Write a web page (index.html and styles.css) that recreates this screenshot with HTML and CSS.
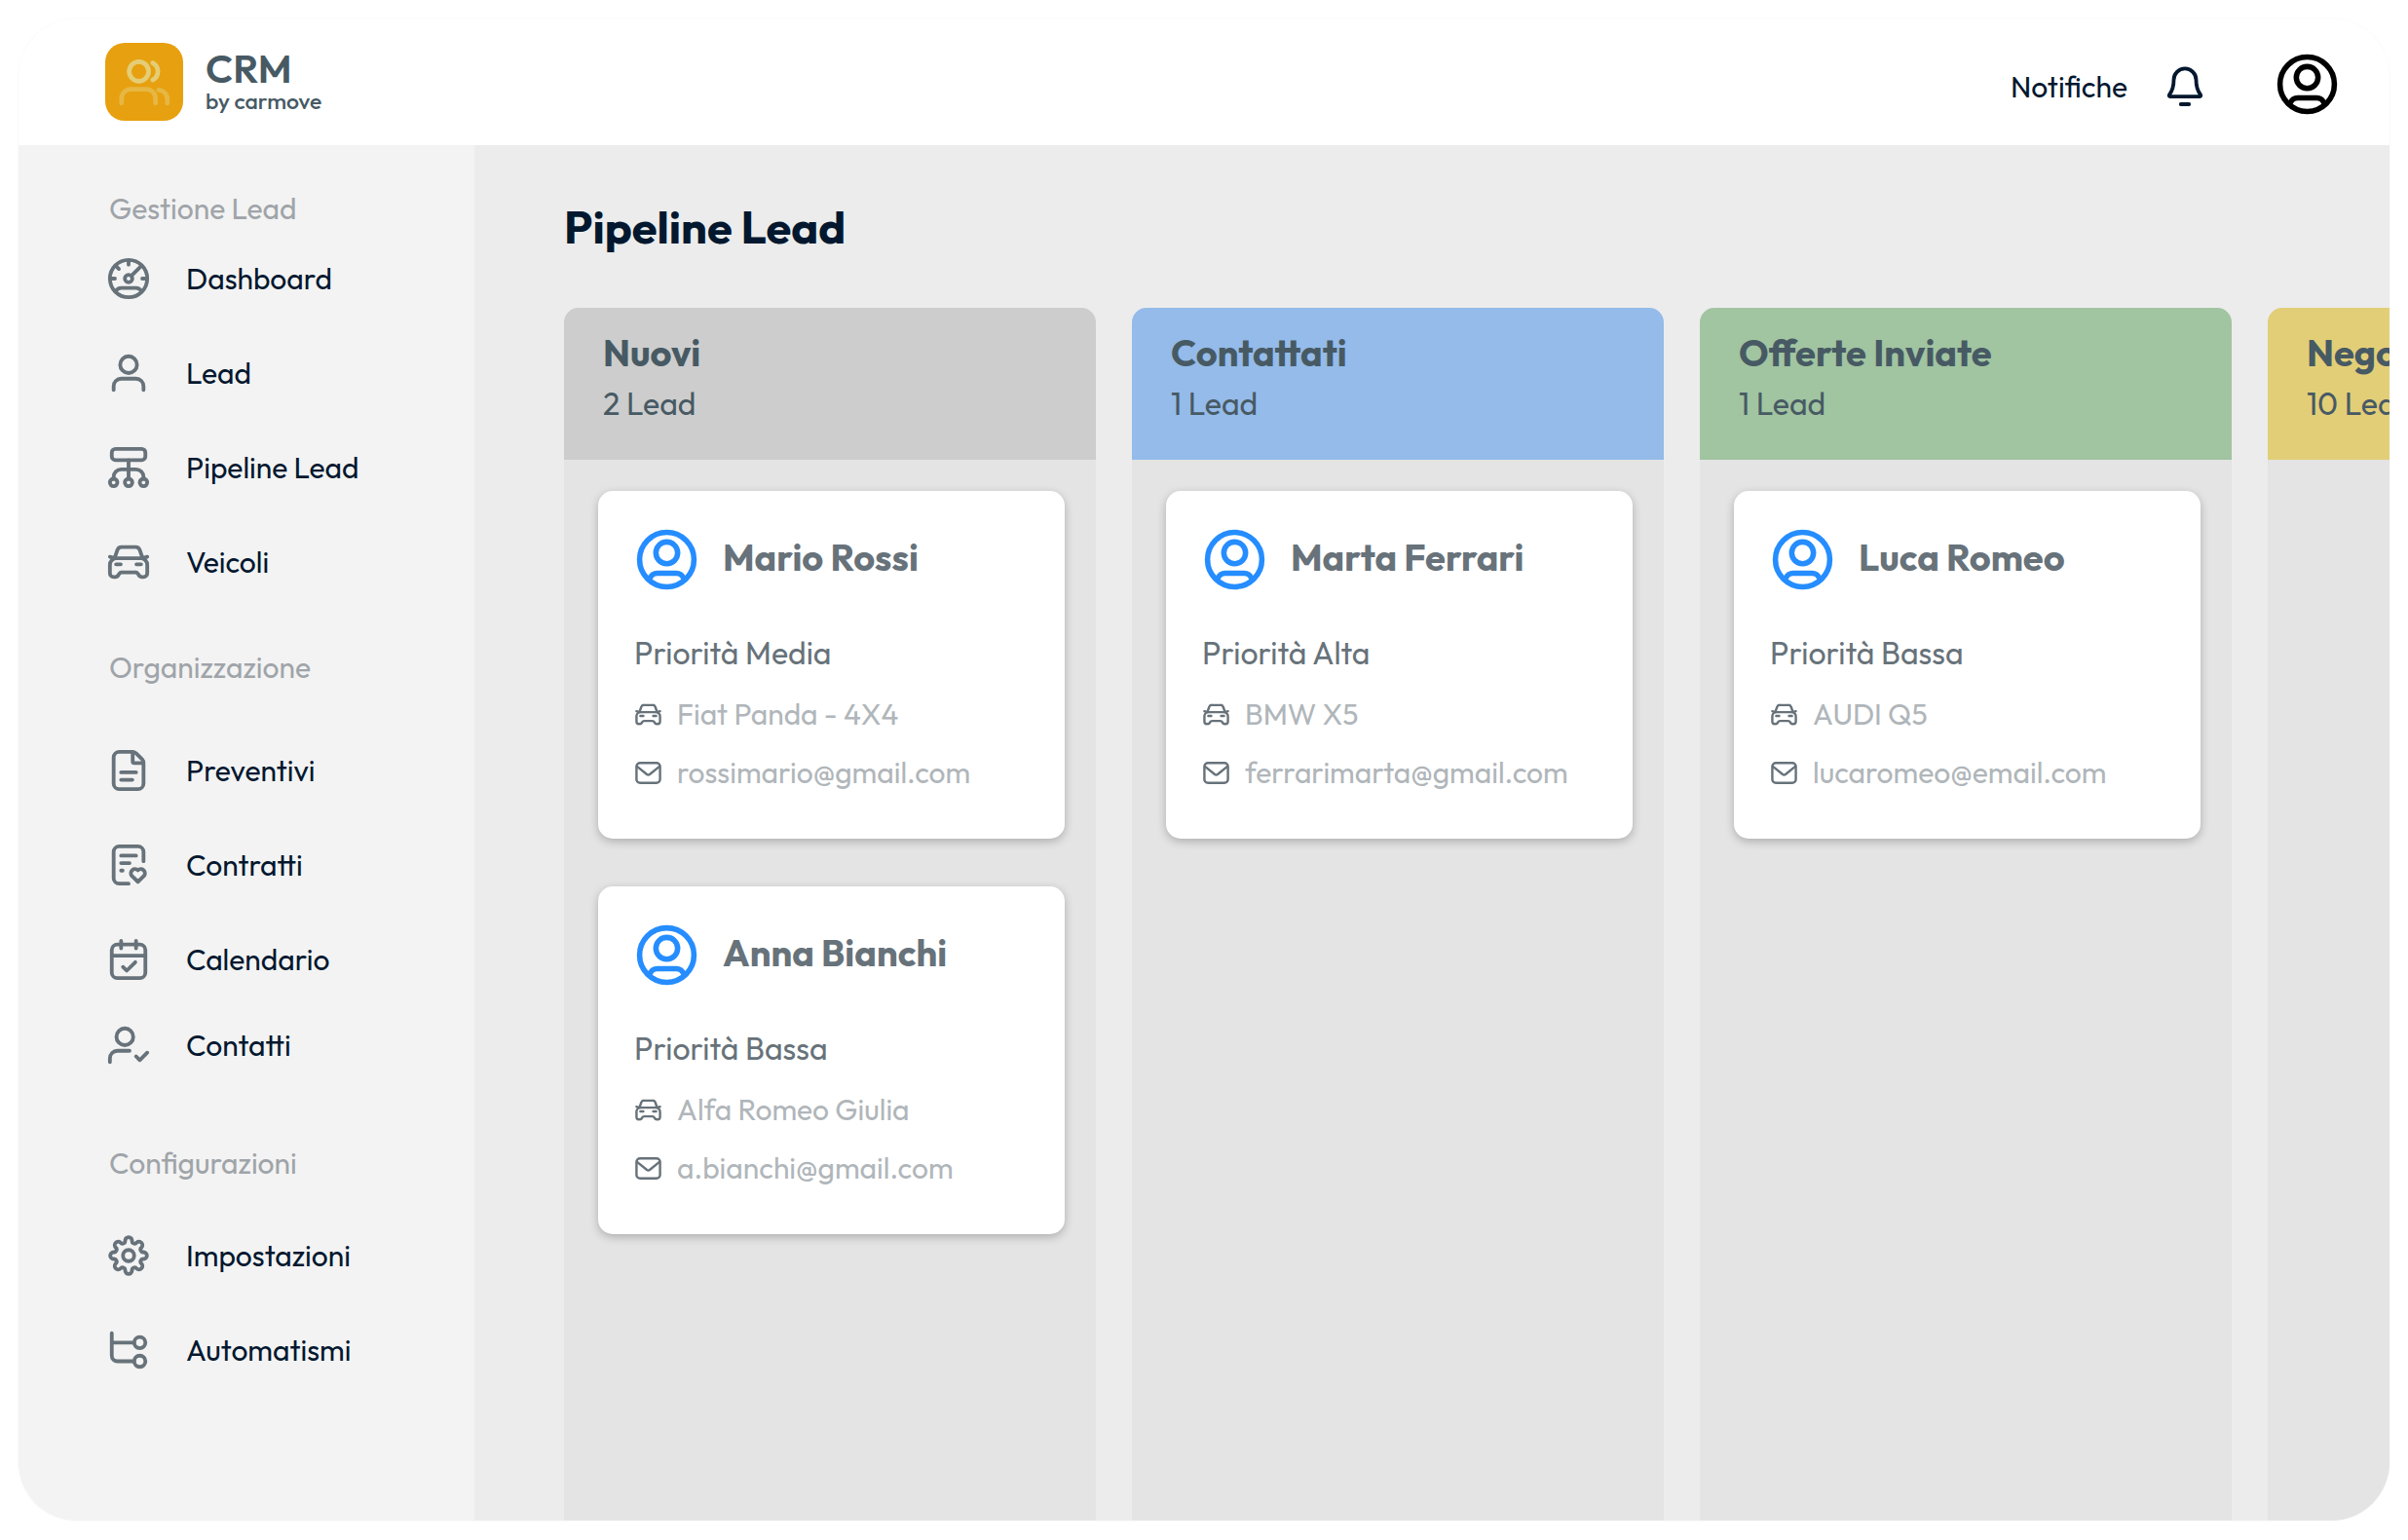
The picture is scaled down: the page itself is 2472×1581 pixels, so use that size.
FILE: index.html
```html
<!DOCTYPE html>
<html lang="it">
  <head>
    <meta charset="utf-8">
    <meta name="viewport" content="width=device-width, initial-scale=1">
    <title>CRM by carmove</title>
    <link rel="stylesheet" href="styles.css">
  </head>
  <body>
    <!-- icon set -->
    <svg class="sprite" aria-hidden="true">
      <symbol id="i-gauge" viewBox="0 0 24 24">
        <circle cx="12" cy="12" r="10"/><circle cx="12" cy="12" r="2"/>
        <path d="M13.5 10.5l5-5M12 2.5v2M2.5 12h2.2M19.3 12h2.2M5.4 5.4L6.8 6.8M5 19c.6-1.2 1.6-2 3-2h8c1.4 0 2.4.8 3 2"/>
      </symbol>
      <symbol id="i-user" viewBox="0 0 24 24">
        <circle cx="12" cy="7.5" r="4.5"/>
        <path d="M4 21v-2a4 4 0 0 1 4-4h8a4 4 0 0 1 4 4v2"/>
      </symbol>
      <symbol id="i-pipeline" viewBox="0 0 24 24">
        <rect x="3" y="2" width="18" height="6" rx="2"/>
        <circle cx="4" cy="20" r="2"/><circle cx="12" cy="20" r="2"/><circle cx="20" cy="20" r="2"/>
        <path d="M12 8v10M4 18v-1a4 4 0 0 1 4-4h8a4 4 0 0 1 4 4v1"/>
      </symbol>
      <symbol id="i-car" viewBox="0 0 24 24">
        <path d="M5.5 10h13a3.5 3.5 0 0 1 3.5 3.5V18a2 2 0 0 1-2 2h-.8a2 2 0 0 1-1.8-1.1l-.2-.4a2 2 0 0 0-1.8-1H8.6a2 2 0 0 0-1.8 1l-.2.4A2 2 0 0 1 4.8 20H4a2 2 0 0 1-2-2v-4.5A3.5 3.5 0 0 1 5.5 10z"/>
        <path d="M4.5 10L6 5.6A2.4 2.4 0 0 1 8.3 4h7.4A2.4 2.4 0 0 1 18 5.6L19.5 10M2 9.2l2.5.8M22 9.2l-2.5.8M5.3 13.2h2.5M16.2 13.2h2.5"/>
      </symbol>
      <symbol id="i-file" viewBox="0 0 24 24">
        <path d="M7 2h7.2a3 3 0 0 1 2 .9l3 3A3 3 0 0 1 20 8.1V19a3 3 0 0 1-3 3H7a3 3 0 0 1-3-3V5a3 3 0 0 1 3-3z"/>
        <path d="M14.2 2.2V7a1 1 0 0 0 1 1h4.6M8 13h8M8 17h6"/>
      </symbol>
      <symbol id="i-contract" viewBox="0 0 24 24">
        <path d="M12 22H7a3 3 0 0 1-3-3V5a3 3 0 0 1 3-3h10a3 3 0 0 1 3 3v5M8 7h8M8 11h4.5M8 15h.8"/>
        <path d="M17 21l-3.4-3.3a2.25 2.25 0 0 1 3.4-2.9 2.25 2.25 0 0 1 3.4 2.9z"/>
      </symbol>
      <symbol id="i-calendar" viewBox="0 0 24 24">
        <rect x="3" y="4" width="18" height="18" rx="3"/>
        <path d="M8 2v4M16 2v4M3 10h18M9 16l2 2 4.6-4.5"/>
      </symbol>
      <symbol id="i-user-check" viewBox="0 0 24 24">
        <circle cx="10" cy="7.5" r="4.5"/>
        <path d="M2 21v-2a4 4 0 0 1 4-4h6.5M16 18l2 2 4-4"/>
      </symbol>
      <symbol id="i-gear" viewBox="0 0 24 24">
        <circle cx="12" cy="12" r="3"/>
        <path d="M19.99 10.16A1.84 1.84 0 0 1 19.99 13.84A1.4 1.4 0 0 0 18.95 16.35A1.84 1.84 0 0 1 16.35 18.95A1.4 1.4 0 0 0 13.84 19.99A1.84 1.84 0 0 1 10.16 19.99A1.4 1.4 0 0 0 7.65 18.95A1.84 1.84 0 0 1 5.05 16.35A1.4 1.4 0 0 0 4.01 13.84A1.84 1.84 0 0 1 4.01 10.16A1.4 1.4 0 0 0 5.05 7.65A1.84 1.84 0 0 1 7.65 5.05A1.4 1.4 0 0 0 10.16 4.01A1.84 1.84 0 0 1 13.84 4.01A1.4 1.4 0 0 0 16.35 5.05A1.84 1.84 0 0 1 18.95 7.65A1.4 1.4 0 0 0 19.99 10.16z"/>
      </symbol>
      <symbol id="i-branch" viewBox="0 0 24 24">
        <circle cx="18" cy="8" r="3"/><circle cx="18" cy="18" r="3"/>
        <path d="M3 3v12a3 3 0 0 0 3 3h9M3 8h12"/>
      </symbol>
      <symbol id="i-bell" viewBox="0 0 24 24">
        <path d="M12 2.3a6 6 0 0 0-6 6c0 3-.6 5.6-2.3 7.9-.4.6-.1 1.1.4 1.1h15.8c.5 0 .8-.5.4-1.1C18.6 13.9 18 11.3 18 8.3a6 6 0 0 0-6-6zM9.8 21.4h4.4"/>
      </symbol>
      <symbol id="i-avatar" viewBox="0 0 24 24">
        <circle cx="12" cy="12" r="10"/><circle cx="12" cy="9.5" r="4"/>
        <path d="M5.8 18.8c.5-1.1 1.3-1.8 2.7-1.8h7c1.4 0 2.2.7 2.7 1.8"/>
      </symbol>
      <symbol id="i-mail" viewBox="0 0 24 24">
        <rect x="2" y="3.5" width="20" height="17" rx="3"/>
        <path d="M2.5 6.5l8.3 6.7a2 2 0 0 0 2.4 0l8.3-6.7"/>
      </symbol>
      <symbol id="i-users" viewBox="0 0 24 24">
        <circle cx="9.5" cy="7.3" r="4.2"/>
        <path d="M15.5 3.6a4.2 4.2 0 0 1 0 7.4"/>
        <path opacity=".5" d="M2 21v-2a4 4 0 0 1 4-4h6.7a4 4 0 0 1 4 4v2M18 15.3A4 4 0 0 1 21.8 19.3V21"/>
      </symbol>
    </svg>

    <div class="app">
      <header class="topbar">
        <a href="#" class="brand">
          <span class="brand-logo"><svg class="icon"><use href="#i-users"/></svg></span>
          <span class="brand-text">
            <strong class="brand-name">CRM</strong>
            <span class="brand-by">by carmove</span>
          </span>
        </a>
        <div class="topbar-actions">
          <button type="button" class="notify">
            Notifiche
            <svg class="icon"><use href="#i-bell"/></svg>
          </button>
          <button type="button" class="profile" aria-label="Profilo">
            <svg class="icon icon-avatar"><use href="#i-avatar"/></svg>
          </button>
        </div>
      </header>

      <div class="body">
        <nav class="sidebar">
          <section class="nav-group nav-lead">
            <h2 class="nav-title">Gestione Lead</h2>
            <a href="#" class="nav-item"><svg class="icon"><use href="#i-gauge"/></svg>Dashboard</a>
            <a href="#" class="nav-item"><svg class="icon"><use href="#i-user"/></svg>Lead</a>
            <a href="#" class="nav-item"><svg class="icon"><use href="#i-pipeline"/></svg>Pipeline Lead</a>
            <a href="#" class="nav-item"><svg class="icon"><use href="#i-car"/></svg>Veicoli</a>
          </section>
          <section class="nav-group nav-org">
            <h2 class="nav-title">Organizzazione</h2>
            <a href="#" class="nav-item"><svg class="icon"><use href="#i-file"/></svg>Preventivi</a>
            <a href="#" class="nav-item"><svg class="icon"><use href="#i-contract"/></svg>Contratti</a>
            <a href="#" class="nav-item"><svg class="icon"><use href="#i-calendar"/></svg>Calendario</a>
            <a href="#" class="nav-item nav-item-short"><svg class="icon"><use href="#i-user-check"/></svg>Contatti</a>
          </section>
          <section class="nav-group nav-config">
            <h2 class="nav-title">Configurazioni</h2>
            <a href="#" class="nav-item"><svg class="icon"><use href="#i-gear"/></svg>Impostazioni</a>
            <a href="#" class="nav-item"><svg class="icon"><use href="#i-branch"/></svg>Automatismi</a>
          </section>
        </nav>

        <main class="content">
          <h1 class="page-title">Pipeline Lead</h1>
          <div class="board">
            <section class="column">
              <header class="column-head grey">
                <h2 class="column-title">Nuovi</h2>
                <p class="column-count">2 Lead</p>
              </header>
              <div class="cards">
                <article class="card">
                  <div class="card-head">
                    <svg class="icon icon-avatar"><use href="#i-avatar"/></svg>
                    <h3 class="card-name">Mario Rossi</h3>
                  </div>
                  <p class="card-priority">Priorità Media</p>
                  <p class="card-info"><svg class="icon icon-small"><use href="#i-car"/></svg>Fiat Panda - 4X4</p>
                  <p class="card-info"><svg class="icon icon-small"><use href="#i-mail"/></svg>rossimario@gmail.com</p>
                </article>
                <article class="card">
                  <div class="card-head">
                    <svg class="icon icon-avatar"><use href="#i-avatar"/></svg>
                    <h3 class="card-name">Anna Bianchi</h3>
                  </div>
                  <p class="card-priority">Priorità Bassa</p>
                  <p class="card-info"><svg class="icon icon-small"><use href="#i-car"/></svg>Alfa Romeo Giulia</p>
                  <p class="card-info"><svg class="icon icon-small"><use href="#i-mail"/></svg>a.bianchi@gmail.com</p>
                </article>
              </div>
            </section>
            <section class="column">
              <header class="column-head blue">
                <h2 class="column-title">Contattati</h2>
                <p class="column-count">1 Lead</p>
              </header>
              <div class="cards">
                <article class="card">
                  <div class="card-head">
                    <svg class="icon icon-avatar"><use href="#i-avatar"/></svg>
                    <h3 class="card-name">Marta Ferrari</h3>
                  </div>
                  <p class="card-priority">Priorità Alta</p>
                  <p class="card-info"><svg class="icon icon-small"><use href="#i-car"/></svg>BMW X5</p>
                  <p class="card-info"><svg class="icon icon-small"><use href="#i-mail"/></svg>ferrarimarta@gmail.com</p>
                </article>
              </div>
            </section>
            <section class="column">
              <header class="column-head green">
                <h2 class="column-title">Offerte Inviate</h2>
                <p class="column-count">1 Lead</p>
              </header>
              <div class="cards">
                <article class="card">
                  <div class="card-head">
                    <svg class="icon icon-avatar"><use href="#i-avatar"/></svg>
                    <h3 class="card-name">Luca Romeo</h3>
                  </div>
                  <p class="card-priority">Priorità Bassa</p>
                  <p class="card-info"><svg class="icon icon-small"><use href="#i-car"/></svg>AUDI Q5</p>
                  <p class="card-info"><svg class="icon icon-small"><use href="#i-mail"/></svg>lucaromeo@email.com</p>
                </article>
              </div>
            </section>
            <section class="column">
              <header class="column-head yellow">
                <h2 class="column-title">Negoziazione</h2>
                <p class="column-count">10 Lead</p>
              </header>
            </section>
          </div>
        </main>
      </div>
    </div>
  </body>
</html>
```
FILE: styles.css
```css
* {
    box-sizing: border-box;
}
body {
    margin: 0;
    padding: 19px 19px 20px;
    min-height: 100vh;
    display: flex;
    background: #fff;
    color: #03182f;
    font-family: Outfit, Lato, sans-serif;
    font-size: 30px;
    line-height: 40px;
}
h1, h2, h3, p {
    margin: 0;
}
a {
    color: inherit;
    text-decoration: none;
}
button {
    padding: 0;
    border: 0;
    background: none;
    color: inherit;
    font: inherit;
    cursor: pointer;
}
.sprite {
    position: absolute;
    width: 0;
    height: 0;
}
.icon {
    width: 46px;
    height: 46px;
    flex: none;
    display: block;
    fill: none;
    stroke: currentColor;
    stroke-width: 2;
    stroke-linecap: round;
    stroke-linejoin: round;
}
.icon-avatar {
    width: 67px;
    height: 67px;
}
.icon-small {
    width: 29px;
    height: 29px;
    color: #67727a;
}

.app {
    flex: 1;
    min-width: 0;
    display: flex;
    flex-direction: column;
    border-radius: 60px;
    overflow: hidden;
    box-shadow: 0 0 0 1px #fafafa;
}

/* top bar */
.topbar {
    height: 130px;
    padding: 0 51px 0 89px;
    display: flex;
    align-items: center;
    justify-content: space-between;
    background: #fff;
}
.brand {
    display: flex;
    align-items: center;
    gap: 23px;
    color: #475a64;
}
.brand-logo {
    width: 80px;
    height: 80px;
    display: flex;
    align-items: center;
    justify-content: center;
    border-radius: 20px;
    background: #e7a00f;
    color: #e5cd75;
}
.brand-logo .icon {
    width: 57px;
    height: 57px;
}
.brand-text {
    padding-bottom: 2px;
    display: flex;
    flex-direction: column;
}
.brand-name {
    font-size: 41px;
    line-height: 42px;
    font-weight: 600;
}
.brand-by {
    font-size: 23px;
    line-height: 26px;
    font-weight: 500;
}
.topbar-actions {
    padding-top: 5px;
    display: flex;
    align-items: center;
    gap: 69px;
}
.notify {
    padding-top: 4px;
    display: flex;
    align-items: center;
    gap: 36px;
}
.profile {
    color: #000;
}

.body {
    flex: 1;
    display: flex;
}

/* sidebar */
.sidebar {
    width: 468px;
    flex: none;
    padding: 45px 30px 60px 90px;
    background: #f3f3f3;
}
.nav-group {
    display: flex;
    flex-direction: column;
}
.nav-org {
    margin-top: 40px;
}
.nav-config {
    margin-top: 62px;
}
.nav-title {
    padding-left: 3px;
    margin-bottom: 3px;
    color: #9fa4a9;
    font-size: 30px;
    font-weight: 400;
}
.nav-org .nav-title {
    margin-bottom: 37px;
}
.nav-config .nav-title {
    margin-bottom: 26px;
}
.nav-item {
    height: 97px;
    display: flex;
    align-items: center;
    gap: 36px;
}
.nav-item-short {
    height: 79px;
}
.nav-item .icon {
    color: #67727a;
}

/* board */
.content {
    flex: 1;
    min-width: 0;
    padding: 55px 0 0 92px;
    display: flex;
    flex-direction: column;
    background: #ececec;
    overflow: hidden;
}
.page-title {
    margin-bottom: 54px;
    font-size: 47px;
    line-height: 58px;
}
.board {
    flex: 1;
    display: flex;
    gap: 37px;
}
.column {
    width: 546px;
    flex: none;
    background: #e4e4e4;
    border-radius: 15px 15px 0 0;
    overflow: hidden;
}
.column-head {
    height: 156px;
    padding: 20px 40px;
    color: #475a64;
}
.grey {
    background: #cdcdcd;
}
.blue {
    background: #94bbe9;
}
.green {
    background: #a1c4a1;
}
.yellow {
    background: #e3ce78;
}
.column-title {
    font-size: 38px;
    line-height: 52px;
}
.column-count {
    font-size: 32px;
    line-height: 52px;
}
.cards {
    padding: 32px 32px 32px 35px;
    display: flex;
    flex-direction: column;
    gap: 49px;
}
.card {
    height: 357px;
    padding: 37px;
    background: #fff;
    border-radius: 15px;
    box-shadow: 0 3px 10px rgba(0, 0, 0, 0.24);
}
.card-head {
    margin-bottom: 35px;
    display: flex;
    align-items: center;
    gap: 24px;
    color: #67727a;
}
.card-head .icon {
    color: #258dff;
}
.card-name {
    padding-bottom: 5px;
    font-size: 38px;
}
.card-priority {
    height: 60px;
    line-height: 54px;
    font-size: 32px;
    color: #67727a;
}
.card-info {
    height: 60px;
    display: flex;
    align-items: center;
    gap: 15px;
    color: #b0b6ba;
}
```
